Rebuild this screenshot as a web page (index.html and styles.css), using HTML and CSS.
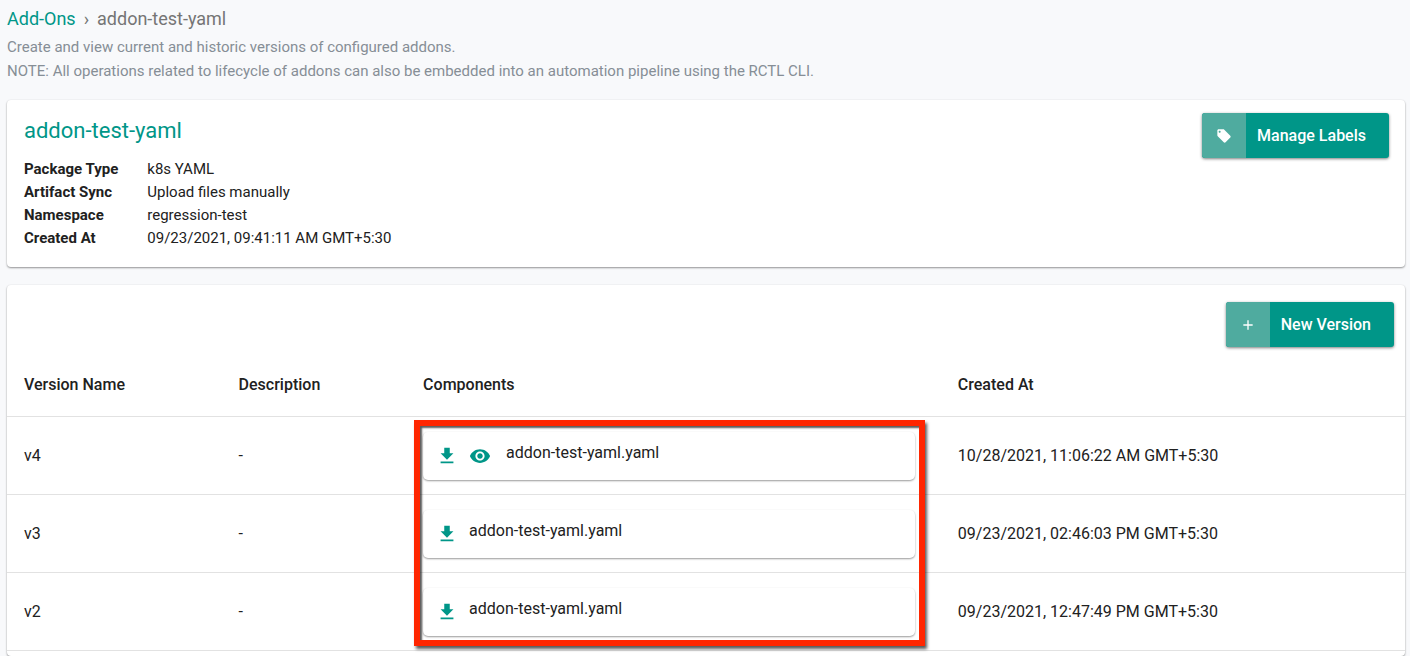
FILE: index.html
```html
<!DOCTYPE html>
<html lang="en">
<head>
<meta charset="utf-8">
<title>Add-Ons - addon-test-yaml</title>
<link rel="stylesheet" href="styles.css">
</head>
<body class="page">
<svg class="sprite" aria-hidden="true">
  <symbol id="download" viewBox="0 0 24 24"><path d="M19 9h-4V3H9v6H5l7 7 7-7zM5 18v2h14v-2H5z"/></symbol>
  <symbol id="eye" viewBox="0 0 24 24"><path d="M12 4.5C7 4.5 2.73 7.61 1 12c1.73 4.39 6 7.5 11 7.5s9.27-3.11 11-7.5c-1.73-4.39-6-7.5-11-7.5zM12 17c-2.76 0-5-2.24-5-5s2.24-5 5-5 5 2.24 5 5-2.24 5-5 5zm0-8c-1.66 0-3 1.34-3 3s1.34 3 3 3 3-1.34 3-3-1.34-3-3-3z"/></symbol>
  <symbol id="tag" viewBox="0 0 24 24"><path d="M21.41 11.58l-9-9C12.05 2.22 11.55 2 11 2H4c-1.1 0-2 .9-2 2v7c0 .55.22 1.05.59 1.42l9 9c.36.36.86.58 1.41.58.55 0 1.05-.22 1.41-.59l7-7c.37-.36.59-.86.59-1.41 0-.55-.23-1.06-.59-1.42zM5.5 7C4.67 7 4 6.33 4 5.5S4.67 4 5.5 4 7 4.67 7 5.5 6.33 7 5.5 7z"/></symbol>
  <symbol id="plus" viewBox="0 0 24 24"><path d="M19 13h-6v6h-2v-6H5v-2h6V5h2v6h6v2z"/></symbol>
</svg>
<header class="intro">
  <nav class="breadcrumb" aria-label="Breadcrumb">
    <a class="breadcrumb-link" href="#">Add-Ons</a>
    <span>›</span>
    <span>addon-test-yaml</span>
  </nav>
  <p class="intro-text">Create and view current and historic versions of configured addons.</p>
  <p class="intro-text">NOTE: All operations related to lifecycle of addons can also be embedded into an automation pipeline using the RCTL CLI.</p>
</header>
<main class="content">
  <section class="card summary">
    <div>
      <h1 class="summary-title">addon-test-yaml</h1>
      <dl class="facts">
        <dt>Package Type</dt><dd>k8s YAML</dd>
        <dt>Artifact Sync</dt><dd>Upload files manually</dd>
        <dt>Namespace</dt><dd>regression-test</dd>
        <dt>Created At</dt><dd>09/23/2021, 09:41:11 AM GMT+5:30</dd>
      </dl>
    </div>
    <button class="button" type="button"><span class="button-icon"><svg class="icon-tag"><use href="#tag"/></svg></span><span class="button-label">Manage Labels</span></button>
  </section>
  <section class="card versions">
    <div class="toolbar">
      <button class="button" type="button"><span class="button-icon"><svg class="icon-plus"><use href="#plus"/></svg></span><span class="button-label">New Version</span></button>
    </div>
    <div class="table-wrap">
      <table class="table">
        <thead>
          <tr><th class="col-name">Version Name</th><th class="col-description">Description</th><th class="col-components">Components</th><th>Created At</th></tr>
        </thead>
        <tbody>
          <tr>
            <td>v4</td><td>-</td>
            <td class="cell-component"><div class="component">
              <button class="icon-button" type="button" aria-label="Download"><svg class="icon"><use href="#download"/></svg></button>
              <button class="icon-button icon-button-view" type="button" aria-label="View"><svg class="icon"><use href="#eye"/></svg></button>
              <span class="component-name">addon-test-yaml.yaml</span></div></td>
            <td>10/28/2021, 11:06:22 AM GMT+5:30</td>
          </tr>
          <tr>
            <td>v3</td><td>-</td>
            <td class="cell-component"><div class="component">
              <button class="icon-button" type="button" aria-label="Download"><svg class="icon"><use href="#download"/></svg></button>
              <span class="component-name">addon-test-yaml.yaml</span></div></td>
            <td>09/23/2021, 02:46:03 PM GMT+5:30</td>
          </tr>
          <tr>
            <td>v2</td><td>-</td>
            <td class="cell-component"><div class="component">
              <button class="icon-button" type="button" aria-label="Download"><svg class="icon"><use href="#download"/></svg></button>
              <span class="component-name">addon-test-yaml.yaml</span></div></td>
            <td>09/23/2021, 12:47:49 PM GMT+5:30</td>
          </tr>
        </tbody>
      </table>
      <div class="highlight"></div>
    </div>
  </section>
</main>
</body>
</html>
```
FILE: styles.css
```css
* { box-sizing: border-box; }

.page {
  display: flex;
  flex-direction: column;
  min-height: 100vh;
  margin: 0;
  padding: 7px 5px 0 7px;
  background: #f8f9fb;
  color: #212121;
  font: 15px/23px Roboto, sans-serif;
}

.sprite { display: none; }

.breadcrumb {
  display: flex;
  gap: 8px;
  margin-bottom: 5px;
  color: #757575;
  font-size: 18px;
  line-height: 23px;
}

.breadcrumb-link { color: #009688; text-decoration: none; }

.intro-text { margin: 0; color: #868e96; line-height: 24px; }

.content {
  display: flex;
  flex: 1;
  flex-direction: column;
  gap: 18px;
  padding-top: 17px;
}

.card {
  background: #fff;
  border-radius: 4px;
  box-shadow: 0 1px 2px rgba(0, 0, 0, .4), 0 0 2px rgba(0, 0, 0, .06);
}

.summary {
  display: flex;
  align-items: flex-start;
  justify-content: space-between;
  padding: 13px 16px 17px 17px;
}

.summary-title {
  margin: 4px 0 14px;
  color: #009688;
  font-size: 22px;
  font-weight: 400;
  line-height: 27px;
}

.facts {
  display: grid;
  grid-template-columns: max-content auto;
  column-gap: 29px;
  margin: 0;
}

.facts dt { font-weight: 700; }
.facts dd { margin: 0; }

.button {
  display: flex;
  height: 45px;
  padding: 0;
  overflow: hidden;
  border: 0;
  border-radius: 3px;
  background: #009688;
  box-shadow: 0 1px 3px rgba(0, 0, 0, .5);
  color: #fff;
  font: 500 16px/45px Roboto, sans-serif;
}

.button-icon {
  display: flex;
  align-items: center;
  justify-content: center;
  width: 44px;
  height: 45px;
  background: #4fab9f;
}

.button-label { padding: 0 23px 0 11px; }
.icon-tag, .icon-plus { width: 16px; height: 16px; fill: currentColor; }

.versions { flex: 1; }

.toolbar {
  display: flex;
  justify-content: flex-end;
  padding: 17px 11px 6px;
}

.table-wrap { position: relative; }

.table {
  width: 100%;
  border-collapse: separate;
  border-spacing: 0;
  table-layout: fixed;
  font-size: 16px;
}

.table th, .table td {
  height: 78px;
  padding: 0 0 0 17px;
  border-bottom: 1px solid #e2e2e2;
  text-align: left;
}

.table th { height: 64px; font-weight: 500; }
.col-name { width: 15.35%; }
.col-description { width: 13.2%; }
.col-components { width: 38.25%; }
.table .cell-component { padding-right: 26px; }

.component {
  display: flex;
  align-items: center;
  height: 48px;
  padding: 0 13px;
  border-radius: 5px;
  box-shadow: 0 1px 2px rgba(0, 0, 0, .4);
}

.icon-button {
  display: flex;
  margin-right: 11px;
  padding: 0;
  border: 0;
  background: none;
  color: #009688;
}

.icon-button-view { margin-right: 15px; }
.icon { width: 22px; height: 22px; fill: currentColor; }
.component-name { padding-bottom: 6px; }

/* Frame drawn over the components column */
.highlight {
  position: absolute;
  top: 67px;
  right: calc(33.2% + 16px);
  bottom: 5px;
  left: calc(28.5% + 9px);
  border: 6px solid #ff2600;
  box-shadow: 2px 3px 3px rgba(0, 0, 0, .65), inset 2px 2px 2px rgba(0, 0, 0, .65);
  pointer-events: none;
}
```
